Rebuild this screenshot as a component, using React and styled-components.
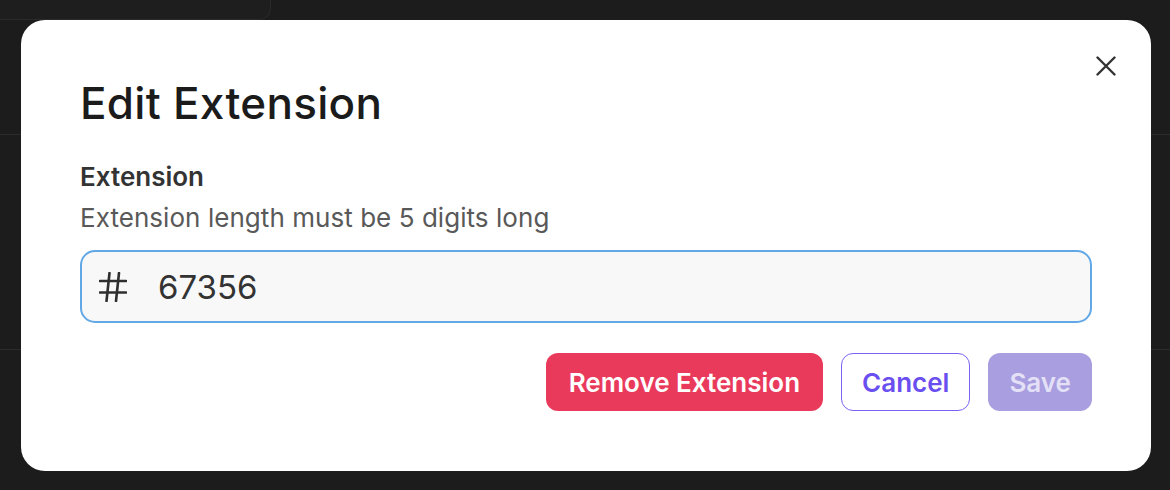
import styled, { createGlobalStyle } from "styled-components";
import { useState } from "react";

const GlobalStyle = createGlobalStyle`
    html, body {
        margin:0;
        padding:0;
        background-color:#1c1c1c;
        font-family:Inter, "Noto Sans", "Liberation Sans", sans-serif;
    }
    * { box-sizing:border-box; }
`

const Backdrop = styled.div`
    width:1170px;
    height:490px;
    overflow:hidden;
`

const TopTab = styled.div`
    width:271px;
    height:20px;
    background-color:#1e1e1e;
    border-right:1px solid #2a2a2a;
    border-bottom:1px solid #2a2a2a;
    border-bottom-right-radius:12px;
`

const BackRow = styled.div`
    height:${props => props.height}px;
    border-bottom:1px solid #2c2c2c;
`

const Overlay = styled.div`
    position:fixed;
    inset:0;
    padding:20px 19px 20px 21px;
`

const Dialog = styled.div`
    position:relative;
    height:451px;
    background-color:#ffffff;
    border-radius:24px;
    padding:57px 59px 58px 59px;
    display:flex;
    flex-direction:column;
`

const CloseButton = styled.button`
    position:absolute;
    top:36px;
    right:35px;
    width:20px;
    height:20px;
    padding:0;
    border:none;
    background:none;
    display:flex;
    cursor:pointer;
`

const Title = styled.h2`
    margin:0;
    font-size:44px;
    line-height:52px;
    font-weight:500;
    color:#1b1b1b;
    letter-spacing:0.3px;
`

const Label = styled.label`
    margin-top:32px;
    font-size:26px;
    line-height:32px;
    font-weight:600;
    color:#333333;
`

const Hint = styled.p`
    margin:7px 0 0 0;
    font-size:26px;
    line-height:36px;
    color:#595959;
    letter-spacing:0.05px;
`

const InputBox = styled.div`
    margin-top:14px;
    height:73px;
    flex-shrink:0;
    border:2px solid #62a8e6;
    border-radius:15px;
    background-color:#f8f8f8;
    display:flex;
    align-items:center;
    padding-left:17px;
    gap:31px;
`

const HashIcon = styled.svg`
    flex-shrink:0;
`

const NumberInput = styled.input`
    flex:1;
    border:none;
    outline:none;
    background:transparent;
    font-family:inherit;
    font-size:33px;
    color:#333333;
    padding:0;
`

const Actions = styled.div`
    margin-top:30px;
    display:flex;
    justify-content:flex-end;
    gap:18px;
`

const Button = styled.button`
    height:58px;
    padding:0 ${props => props.pad || 20}px;
    border-radius:12px;
    font-family:inherit;
    font-size:26px;
    font-weight:600;
    cursor:pointer;
    border:1px solid ${props => props.border || "transparent"};
    background-color:${props => props.bg};
    color:${props => props.color};
`

function App(){
    const [value, setValue] = useState('67356')

    return(
        <>
            <GlobalStyle />
            <Backdrop>
                <TopTab />
                <BackRow height={115} />
                <BackRow height={215} />
            </Backdrop>
            <Overlay>
                <Dialog>
                    <CloseButton aria-label="Close">
                        <svg width="20" height="20" viewBox="0 0 20 20">
                            <path d="M1.5 1.5 18.5 18.5 M18.5 1.5 1.5 18.5" stroke="#333" strokeWidth="2.4" strokeLinecap="round" />
                        </svg>
                    </CloseButton>
                    <Title>Edit Extension</Title>
                    <Label>Extension</Label>
                    <Hint>Extension length must be 5 digits long</Hint>
                    <InputBox>
                        <HashIcon width="28" height="30" viewBox="0 0 28 30">
                            <path d="M1 9h26 M1 20.5h26 M10.5 1 7.5 29 M20 1 17 29" stroke="#2f2f2f" strokeWidth="2.6" strokeLinecap="round" fill="none" />
                        </HashIcon>
                        <NumberInput value={value} onChange={e => setValue(e.target.value)} />
                    </InputBox>
                    <Actions>
                        <Button bg="#ea3a5c" color="#ffffff" pad={22}>Remove Extension</Button>
                        <Button bg="#ffffff" color="#6a4ff0" border="#7b61f5">Cancel</Button>
                        <Button bg="#a89ee0" color="#e4e0f6">Save</Button>
                    </Actions>
                </Dialog>
            </Overlay>
        </>
    )
}

export default App
